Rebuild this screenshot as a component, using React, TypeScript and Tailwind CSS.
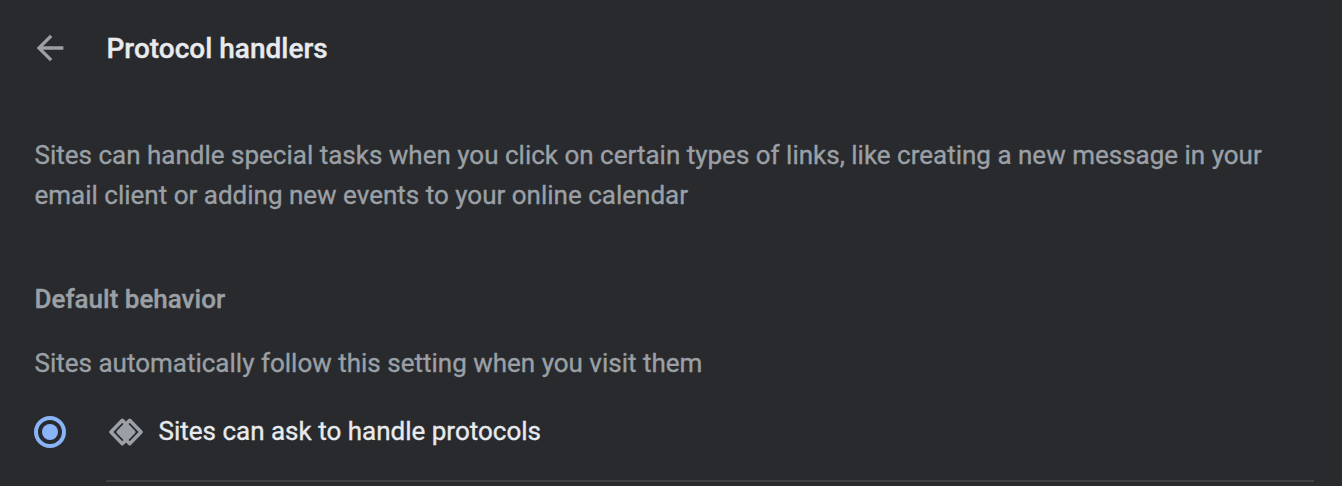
import { useState } from 'react';

function BackIcon() {
  return (
    <svg width="40" height="40" viewBox="0 0 24 24" fill="#9aa0a6" aria-hidden="true">
      <path d="M20 11H7.83l5.59-5.59L12 4l-8 8 8 8 1.41-1.41L7.83 13H20v-2z" />
    </svg>
  );
}

function ProtocolHandlerIcon() {
  return (
    <svg width="40" height="40" viewBox="0 0 40 40" fill="none" aria-hidden="true">
      <g stroke="#9aa0a6" strokeWidth="3.5" strokeLinejoin="round">
        <path d="M16.3 8.3 4.9 20l11.4 11.7L27.7 20z" />
        <path d="M23.7 8.3 12.3 20l11.4 11.7L35.1 20z" />
      </g>
      <path d="M20 10.2 10.4 20l9.6 9.8 9.6-9.8z" fill="#9aa0a6" />
    </svg>
  );
}

export default function App() {
  const [checked, setChecked] = useState(true);

  return (
    <main
      className="flex h-[486px] w-[1342px] flex-col overflow-hidden bg-[#292a2d] text-[26px] leading-10 text-[#9aa0a6] [-webkit-text-stroke:0.35px]"
      style={{ fontFamily: 'Roboto, sans-serif' }}
    >
      <header className="flex h-24 items-center pl-[30px]">
        <button type="button" aria-label="Back">
          <BackIcon />
        </button>
        <h1 className="ml-[36.5px] pt-0.5 text-[28px] font-medium text-[#e8eaed]">Protocol handlers</h1>
      </header>

      <p className="mt-[39px] pl-[34.5px]">
        Sites can handle special tasks when you click on certain types of links, like creating a new message in your
        <br />
        email client or adding new events to your online calendar
      </p>

      <h2 className="mt-16 pl-[34.5px] font-medium">Default behavior</h2>
      <p className="mt-6 pl-[34.5px]">Sites automatically follow this setting when you visit them</p>

      <div className="flex h-[97px] items-center pt-px pl-[34px]">
        <button
          type="button"
          role="radio"
          aria-checked={checked}
          aria-label="Sites can ask to handle protocols"
          onClick={() => setChecked(true)}
          className="flex size-8 items-center justify-center rounded-full border-4 border-[#8ab4f8]"
        >
          {checked && <span className="size-4 rounded-full bg-[#8ab4f8]" />}
        </button>
        <div className="ml-10 flex items-center">
          <ProtocolHandlerIcon />
          <span className="ml-[12.5px] pb-0.5 text-[#e8eaed]">Sites can ask to handle protocols</span>
        </div>
      </div>
      <div className="mr-7 ml-[106px] h-0.5 shrink-0 bg-[#3f4042]" />
    </main>
  );
}
